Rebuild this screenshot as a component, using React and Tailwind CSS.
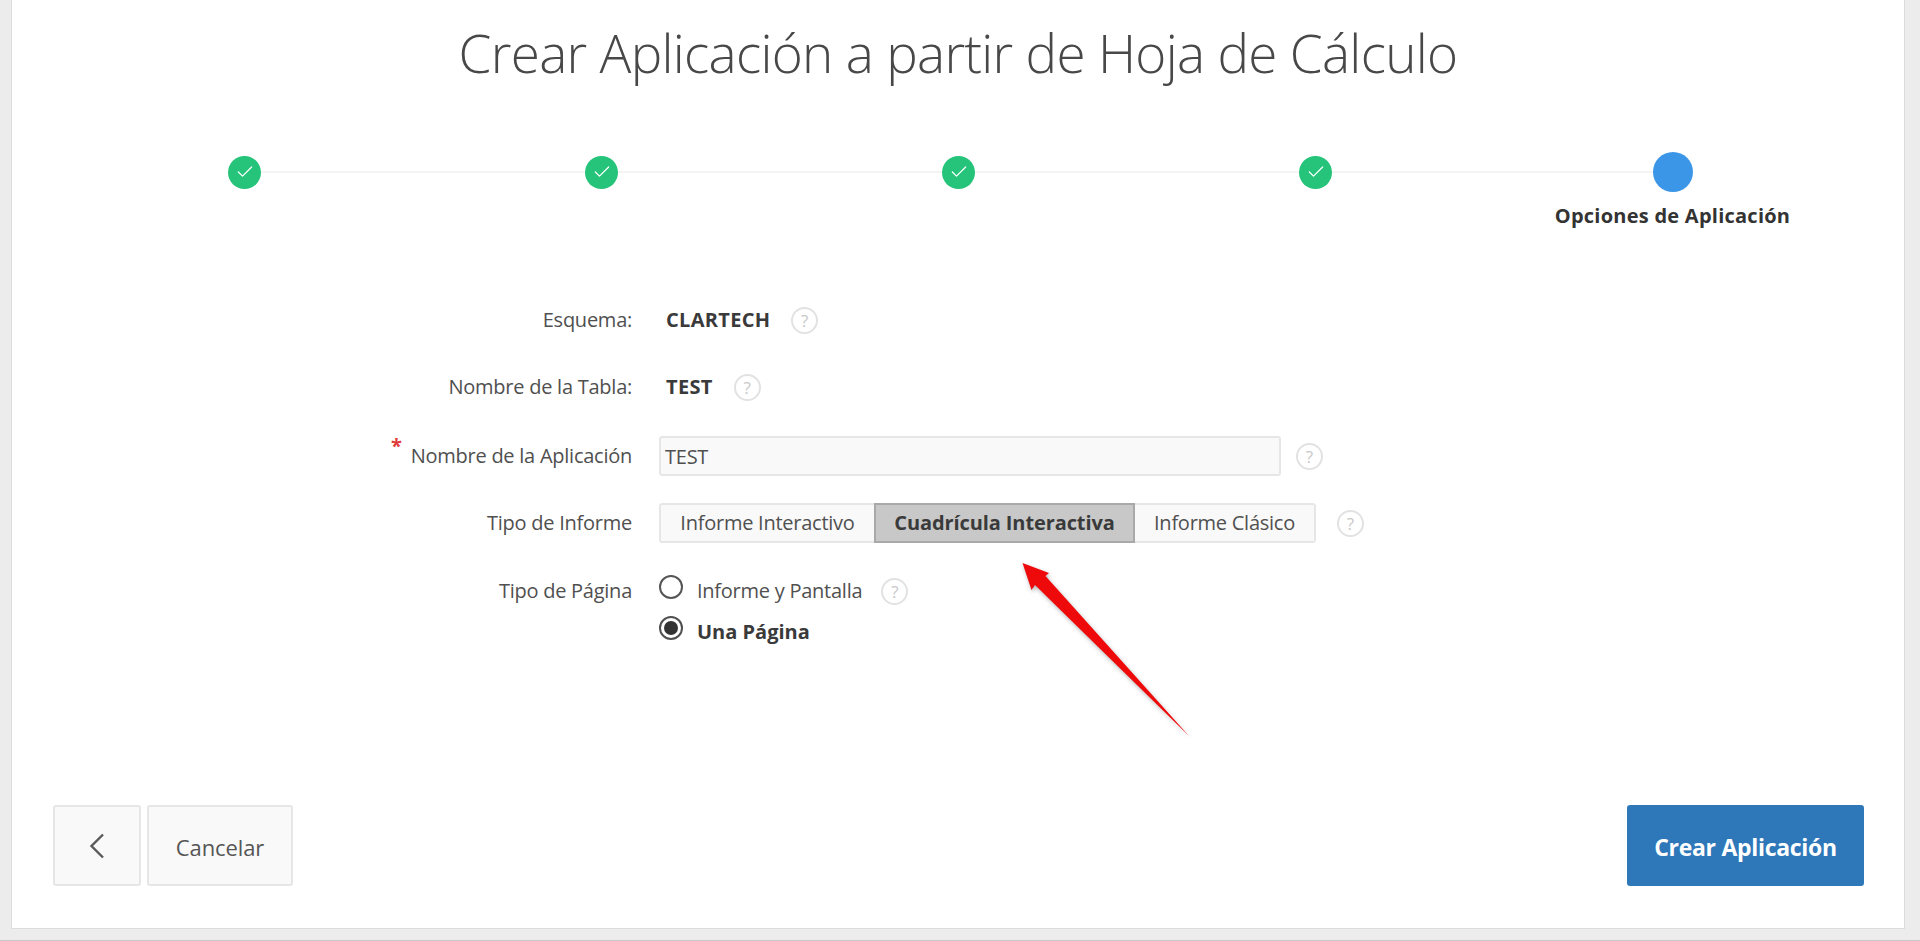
import React from 'react';
import { Check } from 'lucide-react';

const font = "font-['Open_Sans','Noto_Sans',sans-serif]";

const Help = () => (
  <span className="flex h-[27px] w-[27px] shrink-0 items-center justify-center rounded-full border-2 border-[#e2e2e2] text-[17px] leading-none text-[#c8c8c8]">
    ?
  </span>
);

const Step = ({ active, label }) => (
  <div className="relative flex flex-col items-center">
    <div className="flex h-[40px] items-center">
      {active ? (
        <span className="h-[40px] w-[40px] rounded-full bg-[#3b96e8]" />
      ) : (
        <span className="flex h-[33px] w-[33px] items-center justify-center rounded-full bg-[#25c47a] text-white">
          <Check size={20} strokeWidth={1.5} />
        </span>
      )}
    </div>
    {label && (
      <span className="mt-[12px] whitespace-nowrap text-[20px] font-bold leading-[24px] tracking-[0.25px] text-[#333333]">{label}</span>
    )}
  </div>
);

const Row = ({ label, required, className, children }) => (
  <div className={`flex items-center ${className}`}>
    <div className="relative w-[621px] shrink-0 pr-[1px] text-right text-[20px] tracking-[-0.25px] text-[#505050]">
      {required && <span className="absolute left-[379px] top-[-5px] text-[20px] font-bold leading-none text-[#e23b3b]">*</span>}
      {label}
    </div>
    {children}
  </div>
);

const Radio = ({ checked, label }) => (
  <div className="flex items-center">
    <span className={`flex h-[24px] w-[24px] -translate-y-[4px] items-center justify-center rounded-full border-2 ${checked ? 'border-[#505050]' : 'border-[#555555]'} bg-white`}>
      {checked && <span className="h-[14px] w-[14px] rounded-full bg-[#333333]" />}
    </span>
    <span className={`ml-[14px] whitespace-nowrap text-[20px] leading-[30px] ${checked ? 'font-bold tracking-[0px] text-[#3a3a3a]' : 'tracking-[-0.25px] text-[#505050]'}`}>{label}</span>
  </div>
);

export default function App() {
  return (
    <div className={`relative h-[941px] overflow-hidden border-b border-[#c9c9c9] bg-[#ececec] pb-[11px] pl-[11px] pr-[15px] ${font}`}>
      <div className="flex h-full flex-col border border-t-0 border-[#dcdcdc] bg-white">
        <h1 className="mt-[20px] h-[66px] text-center text-[53px] font-light leading-[66px] tracking-[-0.7px] text-[#484848]">
          Crear Aplicación a partir de Hoja de Cálculo
        </h1>

        <div className="relative ml-[54px] mr-[53px] mt-[66px] grid grid-cols-5">
          <div className="absolute left-[178px] right-[178px] top-[19px] h-[2px] bg-[#f4f4f4]" />
          <Step />
          <Step />
          <Step />
          <Step />
          <Step active label="Opciones de Aplicación" />
        </div>

        <div className="mt-[72px] flex flex-col">
          <Row label="Esquema:" className="h-[40px]">
            <span className="ml-[33px] text-[20px] font-bold tracking-[0.3px] text-[#3a3a3a]">CLARTECH</span>
            <span className="ml-[21px]"><Help /></span>
          </Row>
          <Row label="Nombre de la Tabla:" className="mt-[27px] h-[40px]">
            <span className="ml-[33px] text-[20px] font-bold tracking-[0.3px] text-[#3a3a3a]">TEST</span>
            <span className="ml-[21px]"><Help /></span>
          </Row>
          <Row label="Nombre de la Aplicación" required className="mt-[29px] h-[40px]">
            <input
              readOnly
              value="TEST"
              className="ml-[26px] h-[40px] w-[622px] rounded-[3px] border-2 border-[#e6e6e6] bg-[#f9f9f9] px-[4px] text-[20px] tracking-[-0.25px] text-[#505050] outline-none"
            />
            <span className="ml-[15px]"><Help /></span>
          </Row>
          <Row label="Tipo de Informe" className="mt-[27px] h-[40px]">
            <div className="ml-[26px] flex h-[40px] overflow-hidden rounded-[3px] text-[20px] tracking-[-0.25px]">
              <button className="w-[215px] rounded-l-[3px] border-2 border-r-0 border-[#e6e6e6] bg-[#f9f9f9] text-[#505050]">Informe Interactivo</button>
              <button className="w-[261px] border-2 border-[#a9a9a9] bg-[#c8c8c8] font-bold tracking-[-0.1px] text-[#3a3a3a]">Cuadrícula Interactiva</button>
              <button className="w-[181px] rounded-r-[3px] border-2 border-l-0 border-[#e6e6e6] bg-[#f9f9f9] text-[#505050]">Informe Clásico</button>
            </div>
            <span className="ml-[21px]"><Help /></span>
          </Row>
          <div className="mt-[33px] flex items-start">
            <div className="w-[621px] shrink-0 pr-[1px] text-right text-[20px] leading-[30px] tracking-[-0.25px] text-[#505050]">Tipo de Página</div>
            <div className="ml-[26px] flex flex-col gap-[11px]">
              <div className="flex items-center">
                <Radio label="Informe y Pantalla" />
                <span className="ml-[19px]"><Help /></span>
              </div>
              <Radio checked label="Una Página" />
            </div>
          </div>
        </div>

        <div className="mb-[42px] mt-auto flex items-stretch pl-[41px] pr-[40px]">
          <button className="flex h-[81px] w-[88px] items-center justify-center rounded-[3px] border-2 border-[#e6e6e6] bg-[#f9f9f9]">
            <svg width="16" height="26" viewBox="0 0 16 26" fill="none" stroke="#5a5a5a" strokeWidth="2.4"><path d="M14 1.5 2.5 13 14 24.5" /></svg>
          </button>
          <button className="ml-[6px] h-[81px] w-[146px] rounded-[3px] border-2 border-[#e6e6e6] bg-[#f9f9f9] pt-[3px] text-[22px] tracking-[-0.1px] text-[#555555]">Cancelar</button>
          <button className="ml-auto h-[81px] w-[237px] rounded-[3px] bg-[#2e78ba] pt-[3px] text-[23px] font-bold tracking-[-0.3px] text-white">Crear Aplicación</button>
        </div>
      </div>

      <svg className="absolute left-0 top-0 drop-shadow-[1px_2px_2px_rgba(0,0,0,0.3)]" width="1920" height="941" viewBox="0 0 1920 941" fill="#ee0a0a">
        <path d="M1022.5 563 1049 573 1045.5 576 1189 736 1035 585 1031.5 590Z" />
      </svg>
    </div>
  );
}
